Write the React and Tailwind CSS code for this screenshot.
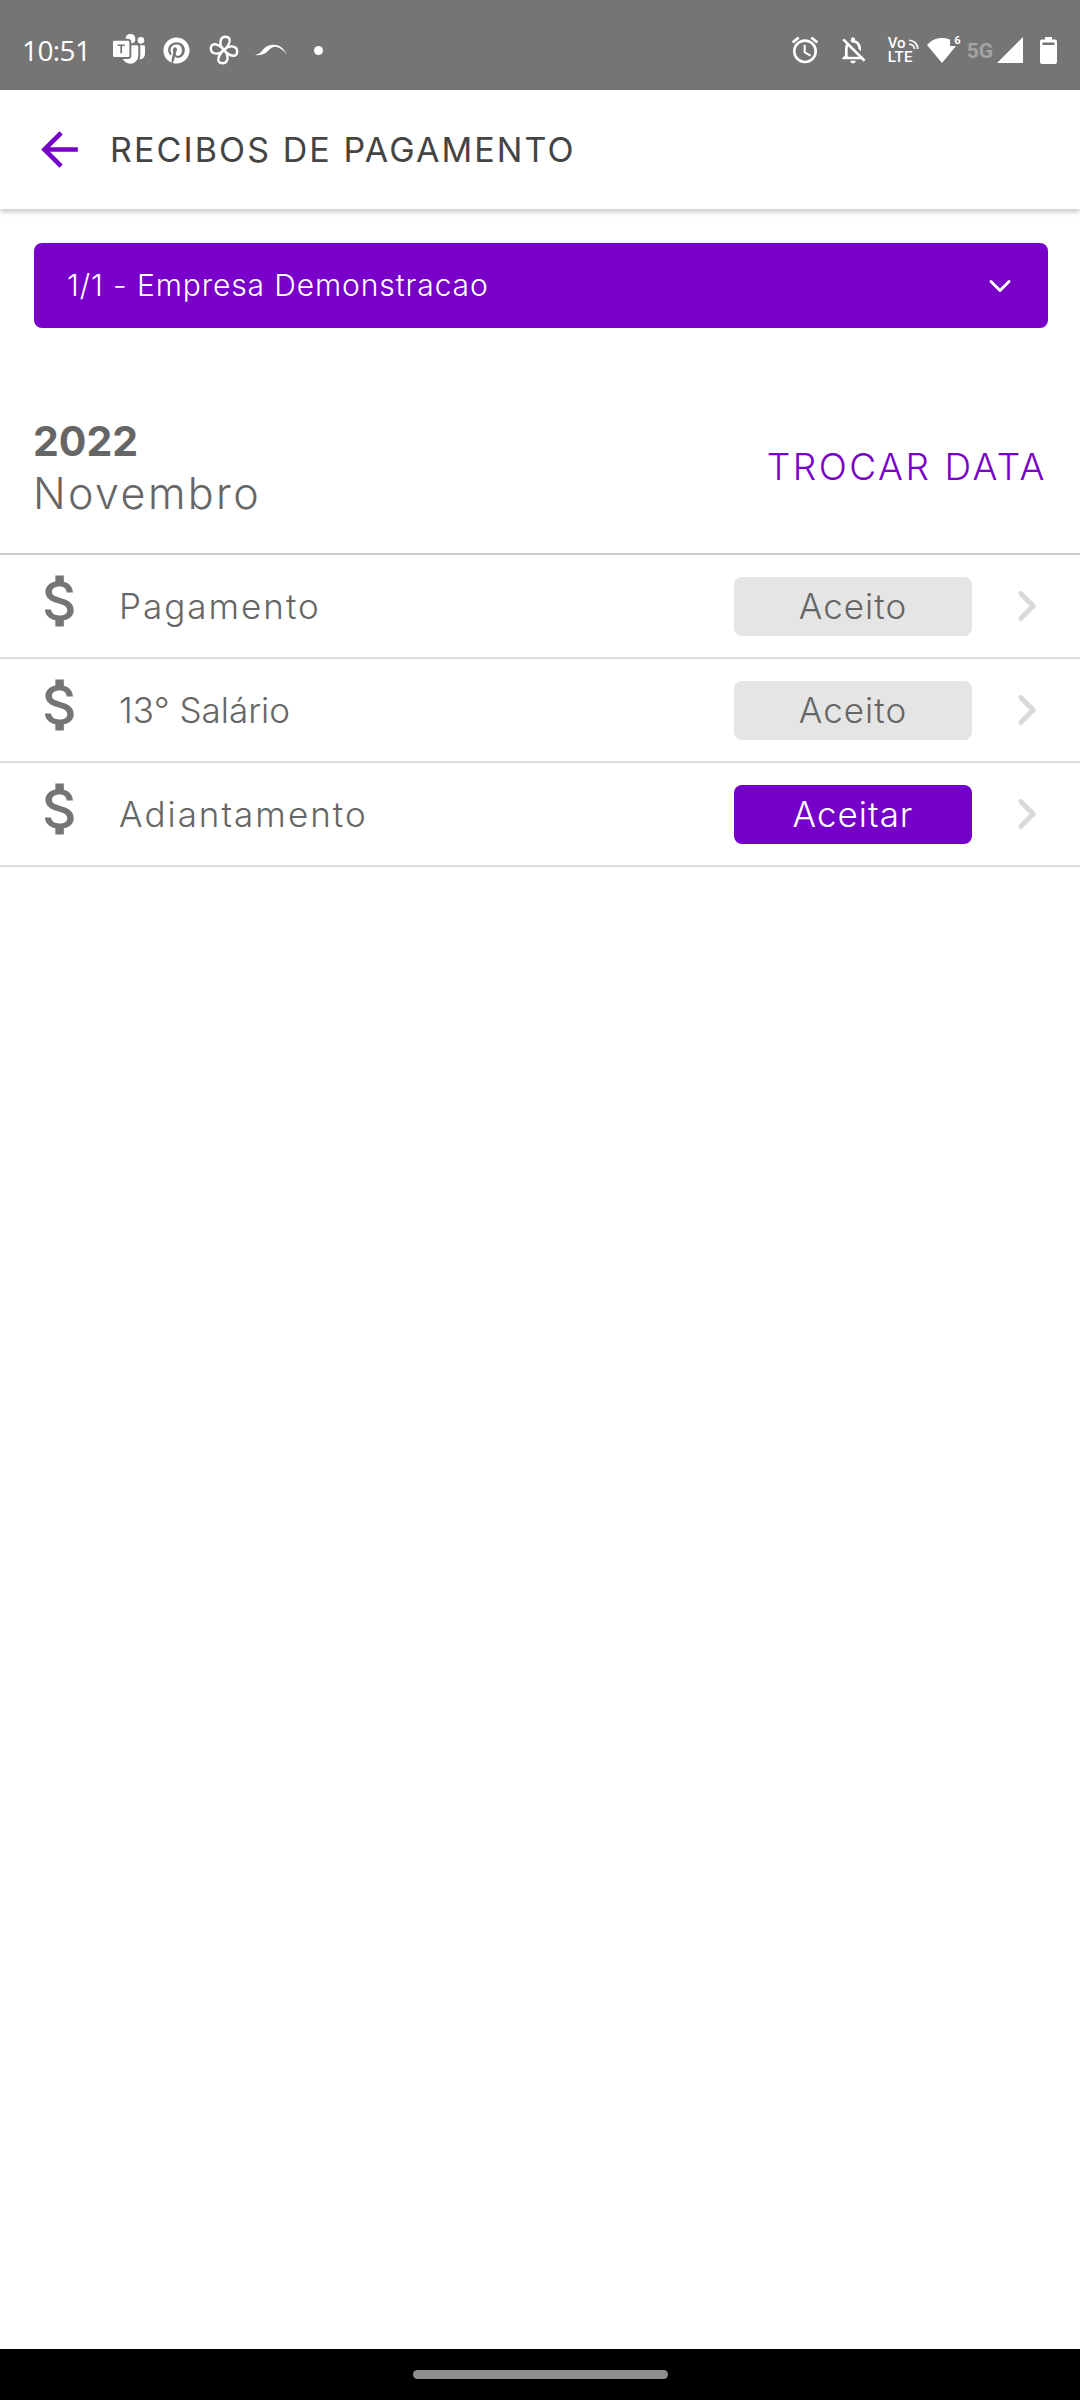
import { ChevronRight, ChevronDown } from 'lucide-react';
import { FaPinterest } from 'react-icons/fa';
import { BsMicrosoftTeams } from 'react-icons/bs';
import { MdOutlineAlarm, MdOutlineNotificationsOff } from 'react-icons/md';

const rows = [
    { label: 'Pagamento', status: 'Aceito', done: true, labelClass: 'tracking-[2px]' },
    { label: '13° Salário', status: 'Aceito', done: true, labelClass: 'tracking-[0px]' },
    { label: 'Adiantamento', status: 'Aceitar', done: false, labelClass: 'tracking-[2px]' },
];

const DollarIcon = () => (
    <svg viewBox="0 0 24 24" className="w-[68px] h-[68px] fill-[#757575] -mt-[10px]">
        <path d="M11.8 10.9c-2.27-.59-3-1.2-3-2.15 0-1.09 1.01-1.85 2.7-1.85 1.78 0 2.44.85 2.5 2.1h2.21c-.07-1.72-1.12-3.3-3.21-3.81V3h-3v2.16c-1.94.42-3.5 1.68-3.5 3.61 0 2.31 1.91 3.46 4.7 4.13 2.5.6 3 1.48 3 2.41 0 .69-.49 1.79-2.7 1.79-2.06 0-2.87-.92-2.98-2.1h-2.2c.12 2.19 1.76 3.42 3.68 3.83V21h3v-2.15c1.95-.37 3.5-1.5 3.5-3.55 0-2.84-2.43-3.81-4.7-4.4z" />
    </svg>
);

const Pinwheel = () => (
    <svg viewBox="0 0 30 30" className="w-[30px] h-[30px] ml-[19px] fill-none stroke-white stroke-[2.4]">
        <path d="M15 15 C11 11 11 7 12 4.500 C13.500 1 19 1 20.500 4 C21.500 7 19 12 15 15Z" />
        <path d="M15 15 C19 11 23 11 25.500 12 C29 13.500 29 19 26 20.500 C23 21.500 18 19 15 15Z" />
        <path d="M15 15 C19 19 19 23 18 25.500 C16.500 29 11 29 9.500 26 C8.500 23 11 18 15 15Z" />
        <path d="M15 15 C11 19 7 19 4.500 18 C1 16.500 1 11 4 9.500 C7 8.500 12 11 15 15Z" />
    </svg>
);

const Swoosh = () => (
    <svg viewBox="0 0 32 12" className="w-[32px] h-[12px] ml-[16px] fill-white">
        <path d="M0 11 C4 10.500 6 8 9 4.500 C13 0 21 -0.500 26 3 C28.500 5 30.500 7.500 32 10.500 C28.500 6.500 24.500 3 20 2.800 C16 2.700 14 7 10.500 9 C7 11 3 11.500 0 11Z" />
    </svg>
);

const VoLte = () => (
    <div className="relative w-[31px] h-[28px] ml-[19px] text-white font-['Roboto',sans-serif] font-medium text-[15px] leading-[14px]">
        <div className="h-[14px]">Vo</div>
        <div className="tracking-[0.5px]">LTE</div>
        <svg viewBox="0 0 12 12" className="absolute right-[-2px] top-[1px] w-[13px] h-[13px] fill-none stroke-white stroke-[1.6]">
            <path d="M1 3 C5 3 9 6 9 11" />
            <path d="M1 6.500 C3.500 6.500 6 8.500 6 11" />
        </svg>
    </div>
);

const Wifi = () => (
    <div className="relative w-[30px] h-[26px] ml-[8px]">
        <svg viewBox="0 0 30 26" className="w-[30px] h-[26px] fill-white">
            <path d="M15 26 L0 8 C4 3.500 9 1 15 1 C18 1 21 1.600 23 2.600 L23 9 L29 9 Z" />
        </svg>
        <span className="absolute right-[-4px] top-[-2px] text-white font-['Roboto',sans-serif] font-bold text-[11px] leading-[12px]">6</span>
    </div>
);

const Battery = () => (
    <svg viewBox="0 0 17 27" className="w-[17px] h-[27px] ml-[17px] fill-white">
        <path d="M5 0h7v2.500h3a2 2 0 0 1 2 2V25a2 2 0 0 1-2 2H2a2 2 0 0 1-2-2V4.500a2 2 0 0 1 2-2h3z" />
        <rect x="2.500" y="5.500" width="12" height="2.500" fill="#757575" />
    </svg>
);

const StatusBar = () => (
    <div className="h-[90px] shrink-0 bg-[#757575] flex items-center pl-[22px] pr-[23px] pt-[10px]">
        <span className="w-[66px] text-white text-[28px] font-['Open_Sans',sans-serif] tracking-[-0.6px]">10:51</span>
        <BsMicrosoftTeams className="ml-[25px] text-white w-[32px] h-[32px]" />
        <FaPinterest className="ml-[18px] text-white w-[27px] h-[27px]" />
        <Pinwheel />
        <Swoosh />
        <div className="ml-[27px] w-[9px] h-[9px] rounded-full bg-white" />
        <div className="flex-1" />
        <MdOutlineAlarm className="text-white w-[32px] h-[32px]" />
        <MdOutlineNotificationsOff className="ml-[16px] text-white w-[32px] h-[32px]" />
        <VoLte />
        <Wifi />
        <span className="ml-[10px] self-start mt-[31px] text-[#a3a3a3] font-['Roboto',sans-serif] font-bold text-[21px] leading-[20px]">5G</span>
        <svg viewBox="0 0 26 26" className="w-[26px] h-[26px] ml-[4px] fill-white">
            <path d="M26 0V26H0Z" />
        </svg>
        <Battery />
    </div>
);

const Row = ({ label, status, done, labelClass }) => (
    <div className="h-[104px] border-b-2 border-[#dcdcdc] flex items-center pl-[27px] pr-[28px]">
        <DollarIcon />
        <span className={`ml-[24px] flex-1 text-[#666666] text-[35px] font-light ${labelClass}`}>{label}</span>
        <div className={done
            ? 'w-[238px] h-[59px] rounded-[8px] bg-[#e5e5e5] text-[#666666] flex items-center justify-center text-[35px] font-light tracking-[1px]'
            : 'w-[238px] h-[59px] rounded-[8px] bg-[#7500c9] text-white flex items-center justify-center text-[35px] font-light tracking-[1px]'}>
            {status}
        </div>
        <ChevronRight className="ml-[30px] w-[50px] h-[50px] text-[#d9d9d9]" strokeWidth={2.400} />
    </div>
);

export default function App() {
    return (
        <div className="w-[1080px] h-[2400px] flex flex-col bg-white font-['Inter',sans-serif] overflow-hidden">
            <StatusBar />

            <header className="h-[119px] shrink-0 flex items-center bg-white shadow-[0_3px_5px_rgba(0,0,0,0.22)] z-10">
                <svg viewBox="0 0 24 24" className="ml-[32px] w-[55px] h-[55px] fill-[#7500c9]">
                    <path d="M20 11H7.830l5.590-5.590L12 4l-8 8 8 8 1.410-1.410L7.830 13H20v-2z" />
                </svg>
                <h1 className="ml-[23px] text-[#444444] text-[34px] font-normal tracking-[2.1px]">RECIBOS DE PAGAMENTO</h1>
            </header>

            <main className="flex-1">
                <div className="ml-[34px] mr-[32px] mt-[34px] h-[85px] rounded-[8px] bg-[#7800c9] text-white flex items-center justify-between pl-[33px] pr-[30px]">
                    <span className="text-[30px] font-light tracking-[0.9px]">1/1 - Empresa Demonstracao</span>
                    <ChevronDown className="w-[36px] h-[36px]" strokeWidth={2} />
                </div>

                <div className="mt-[87px] h-[140px] pl-[33px] pr-[33px] flex items-start justify-between border-b-2 border-[#cccccc]">
                    <div className="text-[#666666]">
                        <div className="text-[41px] font-bold leading-[52px]">2022</div>
                        <div className="text-[43px] font-light leading-[52px] tracking-[2.4px]">Novembro</div>
                    </div>
                    <button className="mt-[30px] text-[#7800c9] text-[37px] font-light tracking-[2.5px] leading-[44px]">TROCAR DATA</button>
                </div>

                {rows.map((r) => <Row key={r.label} {...r} />)}
            </main>

            <div className="h-[51px] shrink-0 bg-black flex justify-center pt-[21px]">
                <div className="w-[255px] h-[9px] rounded-full bg-[#8e8e8e]" />
            </div>
        </div>
    );
}
